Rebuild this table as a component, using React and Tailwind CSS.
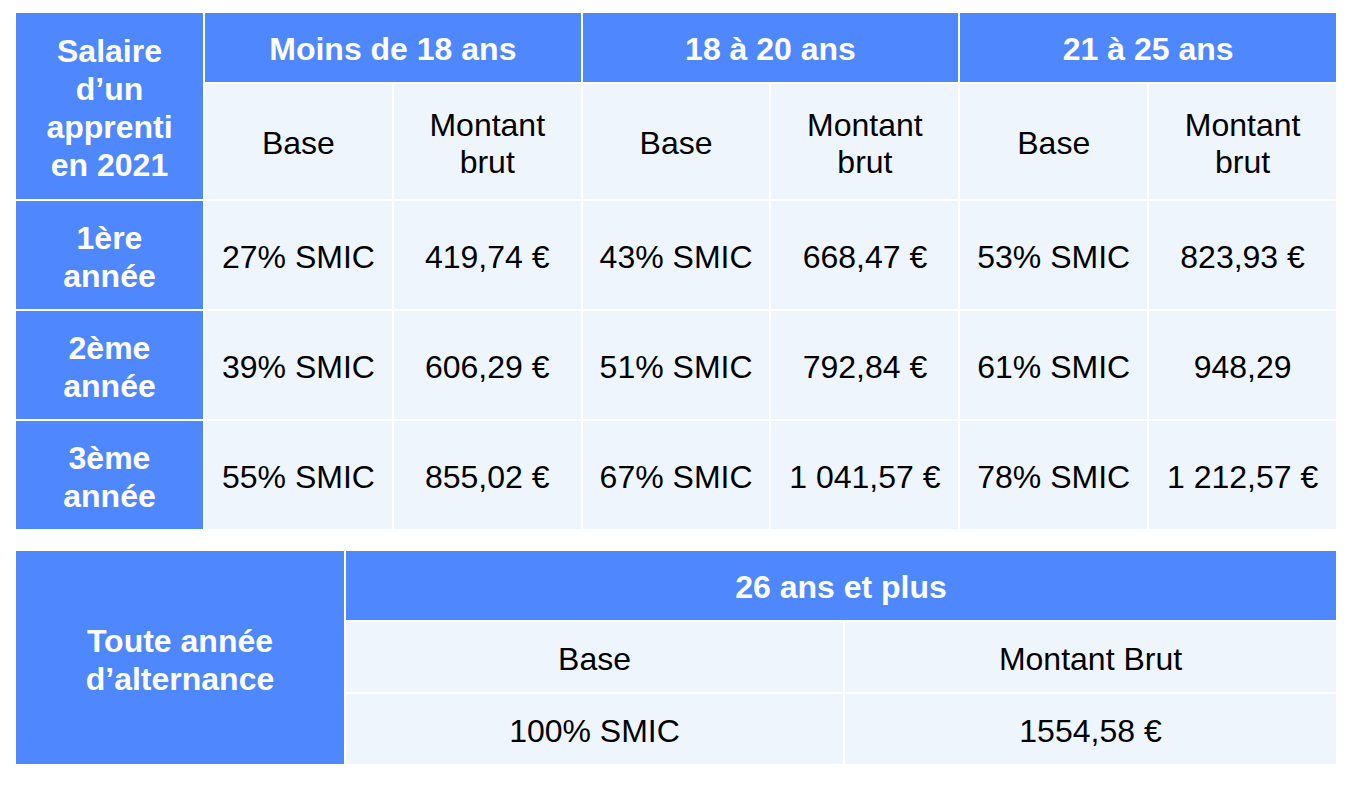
import React from "react";

const blue = "bg-[#4f87fe] text-white font-bold";
const light = "bg-[#eef5fc] text-black";

const Cell = ({ className = "", children }) => (
  <div className={`flex items-center justify-center text-center pt-[4px] ${className}`}>{children}</div>
);

const rows = [
  ["1ère", "27% SMIC", "419,74 €", "43% SMIC", "668,47 €", "53% SMIC", "823,93 €"],
  ["2ème", "39% SMIC", "606,29 €", "51% SMIC", "792,84 €", "61% SMIC", "948,29"],
  ["3ème", "55% SMIC", "855,02 €", "67% SMIC", "1 041,57 €", "78% SMIC", "1 212,57 €"],
];

const App = () => {
  return (
    <div className="w-[1350px] h-[786px] bg-white pt-[13px] pl-[16px] text-[32px] leading-[37px] font-['Liberation_Sans',Arial,sans-serif]">
      {/* Tableau principal */}
      <div className="w-[1320px] grid grid-cols-[187px_repeat(6,1fr)] grid-rows-[69px_115px_108px_108px_108px] gap-[2px] bg-white">
        <Cell className={`${blue} row-span-2 leading-[38px]`}>
          Salaire
          <br />
          d’un
          <br />
          apprenti
          <br />
          en 2021
        </Cell>
        <Cell className={`${blue} col-span-2`}>Moins de 18 ans</Cell>
        <Cell className={`${blue} col-span-2`}>18 à 20 ans</Cell>
        <Cell className={`${blue} col-span-2`}>21 à 25 ans</Cell>
        {[0, 1, 2].map((i) => (
          <React.Fragment key={i}>
            <Cell className={light}>Base</Cell>
            <Cell className={light}>
              Montant
              <br />
              brut
            </Cell>
          </React.Fragment>
        ))}
        {rows.map((r) => (
          <React.Fragment key={r[0]}>
            <Cell className={`${blue} leading-[38px]`}>
              {r[0]}
              <br />
              année
            </Cell>
            {r.slice(1).map((v, j) => (
              <Cell key={j} className={light}>
                {v}
              </Cell>
            ))}
          </React.Fragment>
        ))}
      </div>

      {/* 26 ans et plus */}
      <div className="mt-[22px] w-[1320px] grid grid-cols-[328px_497px_1fr] grid-rows-[69px_70px_70px] gap-[2px] bg-white">
        <Cell className={`${blue} row-span-3 leading-[38px]`}>
          Toute année
          <br />
          d’alternance
        </Cell>
        <Cell className={`${blue} col-span-2`}>26 ans et plus</Cell>
        <Cell className={light}>Base</Cell>
        <Cell className={light}>Montant Brut</Cell>
        <Cell className={light}>100% SMIC</Cell>
        <Cell className={light}>1554,58 €</Cell>
      </div>
    </div>
  );
};

export default App;
